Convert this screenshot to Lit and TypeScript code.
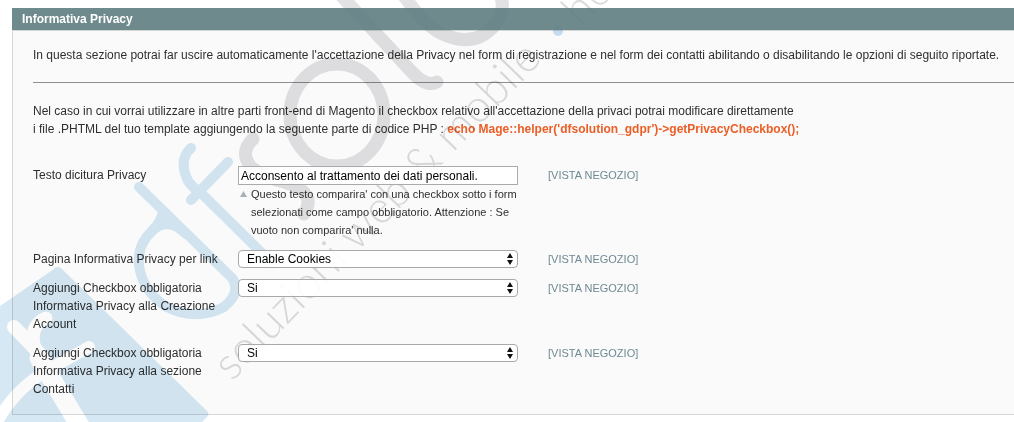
import { LitElement, html, css, svg } from "lit";
import { customElement, state } from "lit/decorators.js";

interface Field {
  id: string;
  label: string;
  kind: "text" | "select";
  value: string;
  options?: string[];
  note?: string;
  scope: string;
}

const FIELDS: Field[] = [
  {
    id: "privacy-text",
    label: "Testo dicitura Privacy",
    kind: "text",
    value: "Acconsento al trattamento dei dati personali.",
    note: "Questo testo comparira' con una checkbox sotto i form selezionati come campo obbligatorio. Attenzione : Se vuoto non comparira' nulla.",
    scope: "[VISTA NEGOZIO]",
  },
  {
    id: "privacy-page",
    label: "Pagina Informativa Privacy per link",
    kind: "select",
    value: "Enable Cookies",
    options: ["Enable Cookies"],
    scope: "[VISTA NEGOZIO]",
  },
  {
    id: "privacy-account",
    label: "Aggiungi Checkbox obbligatoria Informativa Privacy alla Creazione Account",
    kind: "select",
    value: "Si",
    options: ["Si", "No"],
    scope: "[VISTA NEGOZIO]",
  },
  {
    id: "privacy-contacts",
    label: "Aggiungi Checkbox obbligatoria Informativa Privacy alla sezione Contatti",
    kind: "select",
    value: "Si",
    options: ["Si", "No"],
    scope: "[VISTA NEGOZIO]",
  },
];

/** Diagonal brand watermark blended over the page. */
@customElement("brand-watermark")
export class BrandWatermark extends LitElement {
  static styles = css`
    :host {
      display: block;
    }
    .art {
      display: block;
    }
    .blue {
      fill: none;
      stroke: #d5e8f4;
      stroke-width: 10;
      stroke-linecap: round;
      stroke-linejoin: round;
    }
    .tile {
      fill: #d5e8f4;
    }
    .knockout {
      fill: none;
      stroke: #ffffff;
      stroke-linecap: round;
    }
    .gray {
      fill: none;
      stroke: #e2e2e4;
      stroke-width: 13;
      stroke-linecap: round;
    }
    .dot {
      fill: #c9e0f4;
    }
    .claim {
      fill: #dcdcde;
      font-family: Lato, sans-serif;
      font-weight: 300;
      font-size: 45px;
    }
  `;

  render() {
    return html`
      <svg class="art" width="1014" height="422" viewBox="0 0 1014 422" aria-hidden="true">
        ${svg`
          <path class="tile" d="M0 306 L54 269 Q58 265 62 269 L207 411 Q210 414 207 417 L202 422 H0 Z"></path>
          <path class="knockout" stroke-width="14" d="M14 327 L40 354"></path>
          <path class="knockout" stroke-width="19" d="M39 358 L80 426"></path>
          <path class="knockout" stroke-width="13" d="M46 318 Q30 325 34 345 L42 362"></path>
          <path class="knockout" stroke-width="12" d="M89 347 L55 366 Q18 385 -2 420"></path>
          <path class="blue" d="M139 187 L232 278 Q242 292 224 307 Q195 322 165 306 Q142 290 139 265 Q137 245 152 231 Q161 222 163 212"></path>
          <path class="blue" d="M152 231 Q168 216 186 234"></path>
          <path class="blue" d="M191 148 Q178 160 188 181 Q193 188 200 192 L272 263"></path>
          <path class="blue" d="M228 162 L191 200"></path>
          <path class="gray" d="M253 139 Q239 152 251 167 Q264 178 284 182 Q318 192 304 214"></path>
          <ellipse class="gray" cx="337" cy="115" rx="47" ry="51"></ellipse>
          <path class="gray" d="M336 -10 L410 70 Q426 88 437 82"></path>
          <path class="gray" d="M400 -10 Q425 28 445 35 Q475 48 495 25 Q508 8 498 -10"></path>
          <circle class="dot" cx="558" cy="31" r="5"></circle>
          <text class="claim" transform="translate(232 382) rotate(-46)">soluzioni web &amp; mobile</text>
          <text class="claim" transform="translate(581 28) rotate(-46)">ho</text>
        `}
      </svg>
    `;
  }
}

@customElement("app-root")
export class AppRoot extends LitElement {
  static styles = css`
    :host {
      display: block;
      position: relative;
      isolation: isolate;
      overflow: hidden;
      background: #fff;
      color: #2f2f2f;
      font: 12px/18px "Liberation Sans", Arial, sans-serif;
      padding: 8px 0 7px 12px;
    }
    .mark {
      position: absolute;
      top: 0;
      left: 0;
      z-index: 1;
      mix-blend-mode: multiply;
      pointer-events: none;
    }
    .head {
      position: relative;
      z-index: 2;
      background: rgba(95, 125, 129, 0.9);
      color: #fff;
      padding: 2px 10px;
    }
    .title {
      margin: 0;
      font-size: 12px;
      line-height: 18px;
      font-weight: 700;
    }
    .body {
      background: #fafafa;
      border: 1px solid #d6d6d6;
      border-right: 0;
      padding: 15px 0 16px 20px;
    }
    .intro {
      margin: 0;
    }
    .rule {
      border: 0;
      border-top: 1px solid #8f8f8f;
      margin: 18px 0 19px;
    }
    .code {
      color: #eb5e26;
    }
    .fields {
      display: grid;
      gap: 11px;
      margin-top: 28px;
    }
    .row {
      display: grid;
      grid-template-columns: 190px 280px 1fr;
      column-gap: 15px;
      align-items: start;
    }
    .scope {
      padding-left: 15px;
      color: #6f8992;
      font-size: 11px;
    }
    .text,
    .select {
      position: relative;
      z-index: 2;
      display: block;
      box-sizing: border-box;
      width: 100%;
      margin: 0;
      font: 12px/16px "Liberation Sans", Arial, sans-serif;
      color: #000;
      background: rgba(255, 255, 255, 0.9);
    }
    .text {
      height: 19px;
      border: 1px solid #aaa;
      padding: 0 2px;
    }
    .picker {
      display: grid;
      align-items: center;
    }
    .select {
      grid-area: 1 / 1;
      appearance: none;
      height: 18px;
      border: 1px solid #a9a9a9;
      border-radius: 4px;
      padding: 0 20px 0 8px;
    }
    .arrows {
      grid-area: 1 / 1;
      z-index: 3;
      justify-self: end;
      margin-right: 5px;
      pointer-events: none;
    }
    .note {
      display: flex;
      gap: 4px;
      margin: 0;
      padding-left: 2px;
      font-size: 11px;
    }
    .caret {
      flex: none;
      margin-top: 6px;
    }
  `;

  @state() private values: Record<string, string> = Object.fromEntries(
    FIELDS.map((f) => [f.id, f.value])
  );

  private store(id: string, e: Event) {
    const target = e.target as HTMLInputElement | HTMLSelectElement;
    this.values = { ...this.values, [id]: target.value };
  }

  private control(f: Field) {
    if (f.kind === "text") {
      return html`<input class="text" id=${f.id} type="text" .value=${this.values[f.id]}
        @input=${(e: Event) => this.store(f.id, e)} />`;
    }
    return html`<div class="picker">
      <select class="select" id=${f.id} @change=${(e: Event) => this.store(f.id, e)}>
        ${f.options!.map((o) => html`<option ?selected=${o === this.values[f.id]}>${o}</option>`)}
      </select>
      <svg class="arrows" width="6" height="12" viewBox="0 0 6 12" aria-hidden="true">
        <path d="M3 0 L6 5 H0 Z M0 7 H6 L3 12 Z" fill="#111"></path>
      </svg>
    </div>`;
  }

  render() {
    return html`
      <section class="panel">
        <header class="head"><h1 class="title">Informativa Privacy</h1></header>
        <div class="body">
          <p class="intro">
            In questa sezione potrai far uscire automaticamente l'accettazione della Privacy nel form di registrazione e nel form dei contatti abilitando o disabilitando le opzioni di seguito riportate.
          </p>
          <hr class="rule" />
          <p class="intro">
            Nel caso in cui vorrai utilizzare in altre parti front-end di Magento il checkbox relativo all'accettazione della privaci potrai modificare direttamente<br />
            i file .PHTML del tuo template aggiungendo la seguente parte di codice PHP :
            <strong class="code">echo Mage::helper('dfsolution_gdpr')-&gt;getPrivacyCheckbox();</strong>
          </p>
          <form class="fields">
            ${FIELDS.map(
              (f) => html`<div class="row">
                <label class="label" for=${f.id}>${f.label}</label>
                <div class="value">
                  ${this.control(f)}
                  ${f.note
                    ? html`<p class="note">
                        <svg class="caret" width="7" height="6" viewBox="0 0 7 6" aria-hidden="true">
                          <path d="M3.5 0 L7 6 H0 Z" fill="#a9b0b5"></path>
                        </svg>
                        <span>${f.note}</span>
                      </p>`
                    : null}
                </div>
                <span class="scope">${f.scope}</span>
              </div>`
            )}
          </form>
        </div>
      </section>
      <brand-watermark class="mark"></brand-watermark>
    `;
  }
}
